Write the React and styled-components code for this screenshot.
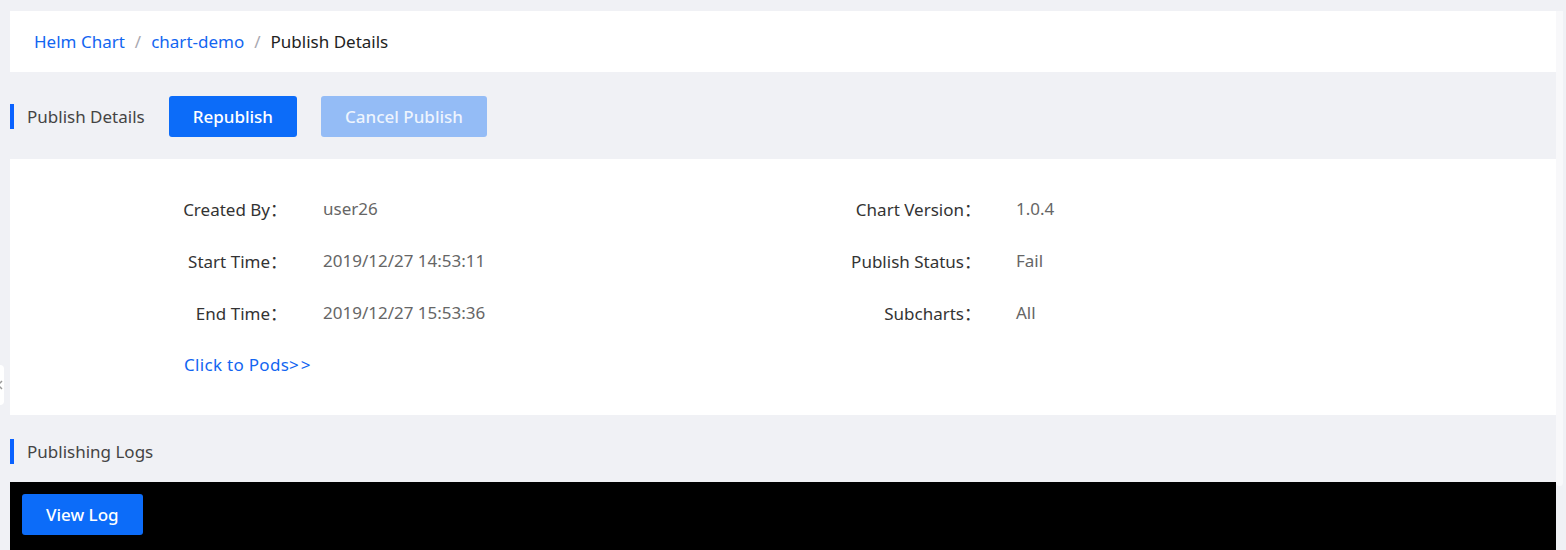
import React from "react";
import styled, { createGlobalStyle } from "styled-components";

const Global = createGlobalStyle`
  html, body { margin: 0; padding: 0; background: #f0f1f5; }
  body { font-family: "Noto Sans", "Noto Sans CJK SC", sans-serif; font-size: 17px; color: #333; }
  * { box-sizing: border-box; }
`;

const Page = styled.div`
  display: flex;
  padding: 11px 3px 0 10px;
  height: 550px;
  overflow: hidden;
  position: relative;
`;

const Main = styled.div`
  width: 1546px;
  display: flex;
  flex-direction: column;
`;

const ScrollTrack = styled.div`
  width: 7px;
  display: flex;
  flex-direction: column;
`;

const ScrollThumb = styled.div`
  height: 475px;
  background: #f8f8fa;
  border-radius: 0 0 4px 4px;
`;

const SideHandle = styled.div`
  position: absolute;
  left: 0;
  top: 365px;
  width: 4px;
  height: 40px;
  background: #fff;
  border-radius: 0 4px 4px 0;
  overflow: hidden;
  display: flex;
  align-items: center;
`;

const Breadcrumb = styled.nav`
  height: 61px;
  background: #fff;
  display: flex;
  align-items: center;
  padding-left: 24px;
`;

const Crumb = styled.a`
  color: ${(p) => (p.$current ? "#222" : "#1266f1")};
  text-decoration: none;
`;

const Sep = styled.span`
  color: #a8a8b0;
  margin: 0 10px;
`;

const SectionHeader = styled.div`
  height: ${(p) => p.$h}px;
  padding-top: ${(p) => p.$pt || 0}px;
  display: flex;
  align-items: center;
`;

const Bar = styled.span`
  width: 4px;
  height: 25px;
  background: #0a62ff;
  margin-right: 13px;
`;

const Title = styled.span`
  color: #444;
`;

const Button = styled.button`
  height: 41px;
  border: none;
  border-radius: 3px;
  padding: 0 24px;
  font-family: inherit;
  font-size: 17px;
  font-weight: 500;
  color: ${(p) => (p.disabled ? "rgba(255,255,255,0.85)" : "#fff")};
  background: ${(p) => (p.disabled ? "#94bcf6" : "#0c6cf9")};
  margin-left: ${(p) => p.$ml || 0}px;
  cursor: ${(p) => (p.disabled ? "not-allowed" : "pointer")};
`;

const Details = styled.div`
  background: #fff;
  height: 256px;
  padding-top: 23px;
  display: grid;
  grid-template-columns: 277px 496px 198px 1fr;
  grid-auto-rows: 52px;
  align-items: center;
`;

const Label = styled.div`
  text-align: right;
  color: #333;
`;

const Value = styled.div`
  padding-left: ${(p) => p.$pl}px;
  color: #666;
`;

const PodsLink = styled.a`
  grid-column: 1 / span 2;
  padding-left: 174px;
  color: #1266f1;
  text-decoration: none;
  letter-spacing: 0.3px;
  span { letter-spacing: 2px; }
`;

const LogPanel = styled.div`
  flex: 1;
  background: #000;
  padding: 12px;
`;

const rows = [
  ["Created By", "user26", "Chart Version", "1.0.4"],
  ["Start Time", "2019/12/27 14:53:11", "Publish Status", "Fail"],
  ["End Time", "2019/12/27 15:53:36", "Subcharts", "All"],
];

export default function App() {
  return (
    <>
      <Global />
      <Page>
        <SideHandle>
          <svg width="8" height="12" viewBox="0 0 8 12" style={{ marginLeft: -4 }}>
            <path d="M6 2 L2 6 L6 10" fill="none" stroke="#999" strokeWidth="1.5" />
          </svg>
        </SideHandle>
        <Main>
          <Breadcrumb>
            <Crumb href="#">Helm Chart</Crumb>
            <Sep>/</Sep>
            <Crumb href="#">chart-demo</Crumb>
            <Sep>/</Sep>
            <Crumb $current>Publish Details</Crumb>
          </Breadcrumb>
          <SectionHeader $h={87} $pt={2}>
            <Bar />
            <Title>Publish Details</Title>
            <Button $ml={24}>Republish</Button>
            <Button $ml={24} disabled>Cancel Publish</Button>
          </SectionHeader>
          <Details>
            {rows.map(([l1, v1, l2, v2]) => (
              <React.Fragment key={l1}>
                <Label>{l1}：</Label>
                <Value $pl={36}>{v1}</Value>
                <Label>{l2}：</Label>
                <Value $pl={35}>{v2}</Value>
              </React.Fragment>
            ))}
            <PodsLink href="#">Click to Pods<span>&gt;&gt;</span></PodsLink>
          </Details>
          <SectionHeader $h={67} $pt={5}>
            <Bar />
            <Title>Publishing Logs</Title>
          </SectionHeader>
          <LogPanel>
            <Button>View Log</Button>
          </LogPanel>
        </Main>
        <ScrollTrack>
          <ScrollThumb />
        </ScrollTrack>
      </Page>
    </>
  );
}
